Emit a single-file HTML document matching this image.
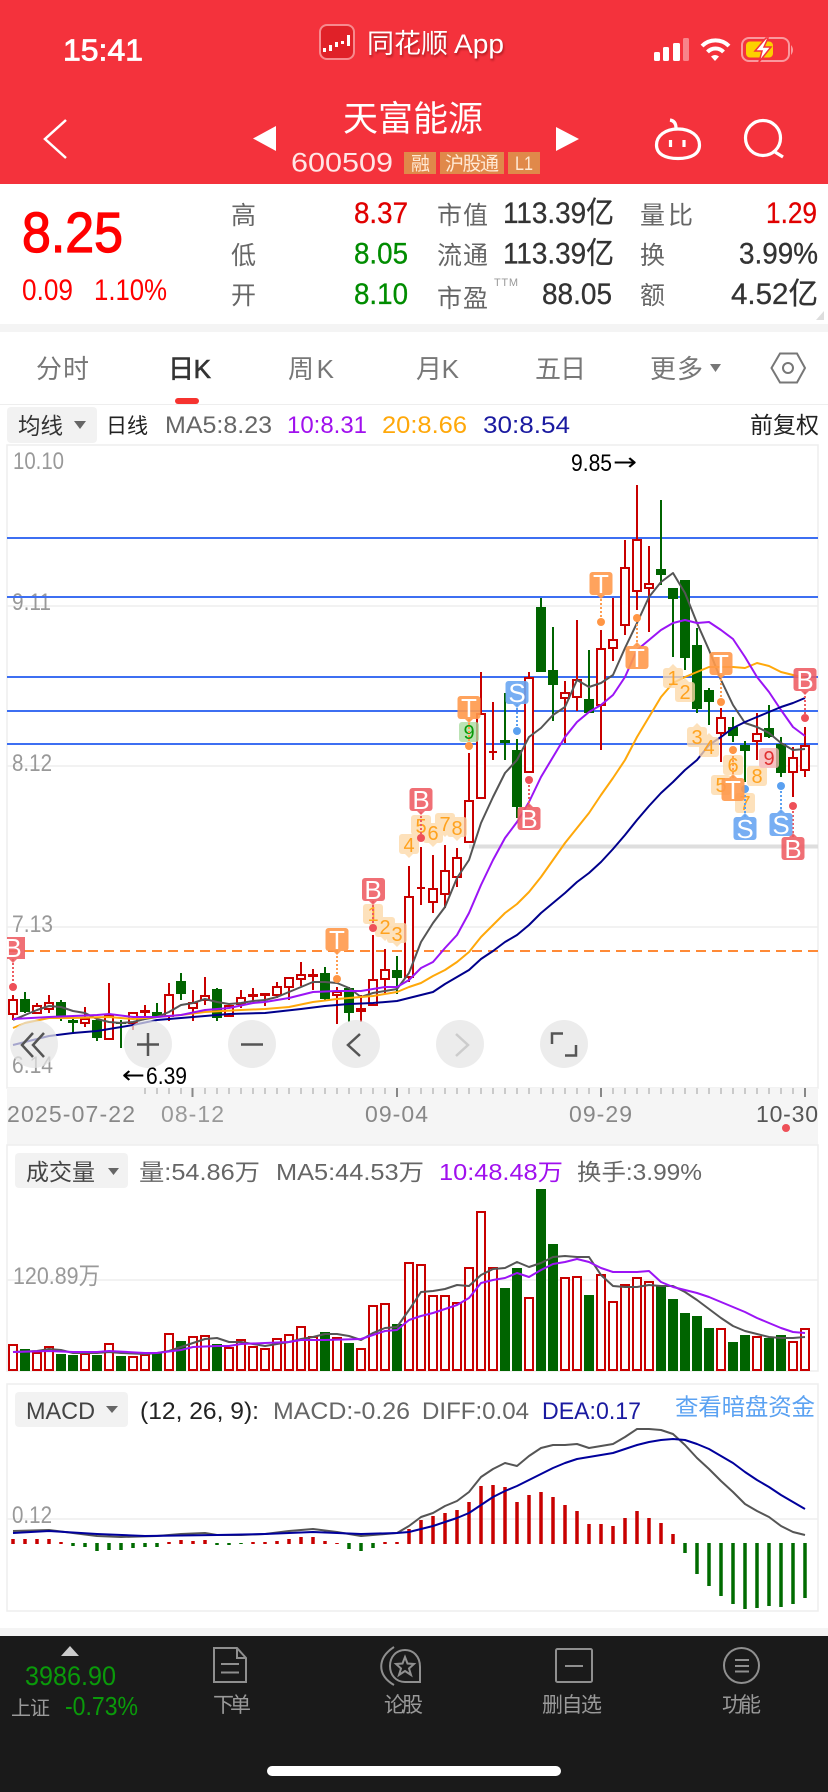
<!DOCTYPE html>
<html lang="zh-CN"><head><meta charset="utf-8"><title>天富能源</title>
<style>
html,body{margin:0;padding:0;background:#fff;width:828px;height:1792px;overflow:hidden}
svg{display:block}
text{font-family:"Liberation Sans","Noto Sans CJK SC",sans-serif}
.w{fill:#fff}
.lab{font-size:25px;fill:#666}
.tab{font-size:26px;fill:#777}
.ax{font-size:24px;fill:#999}
.m{font-size:24px;fill:#666}
.mk{font-size:26px;fill:#fff;text-anchor:middle}
.tg{font-size:20px;fill:#ffa21e;text-anchor:middle}
.foot{font-size:21px;fill:#999}
</style></head><body>
<svg width="828" height="1792" viewBox="0 0 828 1792" xmlns="http://www.w3.org/2000/svg">
<rect width="828" height="1792" fill="#fff"/>
<!-- header -->
<rect width="828" height="184" fill="#f4323c"/>
<text x="63" y="60.5" class="w" font-size="31" stroke="#fff" stroke-width=".8" textLength="80" lengthAdjust="spacingAndGlyphs">15:41</text>
<rect x="320" y="25" width="34" height="34" rx="7" fill="#e02128" stroke="#f78a8e" stroke-width="2"/>
<path d="M323 48h3v4h-3zM329 45h3v6h-3zM335 42h3v5h-3zM341 41h3v3h-3zM347 35h3v11h-3z" fill="#fff"/>
<g style="filter:drop-shadow(1px 2px 1px rgba(90,0,0,.45))">
<text x="367" y="53" class="w" font-size="27" textLength="81">同花顺</text>
<text x="454" y="53" class="w" font-size="27" textLength="50" lengthAdjust="spacingAndGlyphs">App</text></g>
<g fill="#fff"><rect x="654" y="52" width="6" height="9" rx="1.5"/><rect x="663" y="47" width="6" height="14" rx="1.5"/><rect x="673" y="43" width="7" height="18" rx="1.5"/><rect x="683" y="38" width="6" height="23" rx="1.5" opacity=".4"/></g>
<g fill="none" stroke="#fff" stroke-width="4"><path d="M702 46A19 19 0 0 1 729 46"/><path d="M707.500 52A11 11 0 0 1 723.500 52"/></g>
<path d="M711 56.500Q715 53.500 719 56.500L715 61Z" fill="#fff"/>
<rect x="742" y="38" width="47" height="23" rx="7" fill="none" stroke="#fff" stroke-opacity=".5" stroke-width="2"/>
<path d="M791 45q4 5 0 10z" fill="#fff" fill-opacity=".5"/>
<rect x="746" y="41.500" width="27" height="16" rx="4" fill="#fdd000"/>
<path d="M766 38L755 51H762L759 62L771 47H764L768 38Z" fill="#fff" stroke="#f4323c" stroke-width="1.500"/>
<path d="M66 120L45 139L66 158" fill="none" stroke="#fff" stroke-width="2.500"/>
<path d="M276 126V151L253 138.500Z" fill="#fff"/><path d="M556 127V151L579 139Z" fill="#fff"/>
<text x="343" y="131" class="w" font-size="35" textLength="140">天富能源</text>
<text x="291" y="171.500" font-size="27" fill="#ffe6e6" textLength="102" lengthAdjust="spacingAndGlyphs">600509</text>
<rect x="404" y="152" width="32" height="22" fill="#e0894a"/><rect x="440" y="152" width="64" height="22" fill="#e0894a"/><rect x="508" y="152" width="32" height="22" fill="#e0894a"/>
<g font-size="19" fill="#ffe9d4"><text x="411" y="170" textLength="18">融</text><text x="445" y="170" textLength="54">沪股通</text><text x="515" y="170" textLength="18" lengthAdjust="spacingAndGlyphs">L1</text></g>
<g fill="none" stroke="#fff" stroke-width="3.200"><path d="M678 129C691 129 699.500 136 699.500 145C699.500 154 691 158.500 678 158.500C665 158.500 656.500 154 656.500 145C656.500 136 665 129 678 129Z"/><path d="M670 120Q676 121 676 128"/><path d="M670.500 140V147M684 140V147"/>
<circle cx="763" cy="138" r="17.500"/><path d="M775 152L783 157"/></g>
<!-- quote -->
<text x="22" y="252" font-size="57" fill="#f00" stroke="#f00" stroke-width="1.300" textLength="101" lengthAdjust="spacingAndGlyphs">8.25</text>
<text x="22" y="300" font-size="30" fill="#f00" textLength="51" lengthAdjust="spacingAndGlyphs">0.09</text>
<text x="94" y="300" font-size="30" fill="#f00" textLength="73" lengthAdjust="spacingAndGlyphs">1.10%</text>
<g><text x="231" y="224" class="lab">高</text><text x="231" y="264" class="lab">低</text><text x="231" y="304" class="lab">开</text>
<text x="437" y="224" class="lab" textLength="51">市值</text><text x="437" y="264" class="lab" textLength="51">流通</text><text x="437" y="307" class="lab" textLength="51">市盈</text>
<text x="640" y="224" class="lab" textLength="53">量比</text><text x="640" y="264" class="lab">换</text><text x="640" y="304" class="lab">额</text></g>
<text x="494" y="286" font-size="11" fill="#999" textLength="24">TTM</text>
<g font-size="30">
<text x="354" y="223" fill="#e00000" stroke="#e00000" stroke-width=".3" textLength="54" lengthAdjust="spacingAndGlyphs">8.37</text>
<text x="354" y="263.500" fill="#008c00" stroke="#008c00" stroke-width=".3" textLength="54" lengthAdjust="spacingAndGlyphs">8.05</text>
<text x="354" y="304" fill="#008c00" stroke="#008c00" stroke-width=".3" textLength="54" lengthAdjust="spacingAndGlyphs">8.10</text>
<text x="503" y="223" fill="#333" stroke="#333" stroke-width=".3" textLength="111" lengthAdjust="spacingAndGlyphs">113.39亿</text>
<text x="503" y="263.500" fill="#333" stroke="#333" stroke-width=".3" textLength="111" lengthAdjust="spacingAndGlyphs">113.39亿</text>
<text x="542" y="304" fill="#333" stroke="#333" stroke-width=".3" textLength="70" lengthAdjust="spacingAndGlyphs">88.05</text>
<text x="766" y="223" fill="#e00000" stroke="#e00000" stroke-width=".3" textLength="51" lengthAdjust="spacingAndGlyphs">1.29</text>
<text x="739" y="263.500" fill="#333" stroke="#333" stroke-width=".3" textLength="79" lengthAdjust="spacingAndGlyphs">3.99%</text>
<text x="731" y="304" fill="#333" stroke="#333" stroke-width=".3" textLength="87" lengthAdjust="spacingAndGlyphs">4.52亿</text></g>
<path d="M824 311V320H816Z" fill="#ddd"/>
<rect y="324" width="828" height="8" fill="#f4f4f4"/>
<!-- tabs -->
<text x="36" y="378" class="tab" textLength="53">分时</text>
<text x="168" y="378" font-size="26" fill="#333" stroke="#333" stroke-width=".6" textLength="43">日K</text>
<text x="288" y="378" class="tab" textLength="46">周K</text>
<text x="416" y="378" class="tab" textLength="43">月K</text>
<text x="535" y="378" class="tab" textLength="51">五日</text>
<text x="650" y="378" class="tab" textLength="53">更多</text>
<path d="M710 364H721L715.500 372Z" fill="#777"/>
<path d="M771.500 368L780 353.500H797L805 368L797 382.500H780Z" fill="none" stroke="#777" stroke-width="2"/><circle cx="788" cy="368" r="5" fill="none" stroke="#777" stroke-width="2"/>
<rect x="175" y="398" width="24" height="6" rx="3" fill="#f6332f"/>
<rect y="404" width="828" height="1" fill="#eee"/>
<!-- MA row -->
<rect x="7" y="407" width="90" height="36" rx="4" fill="#f2f2f2"/>
<text x="18" y="434" font-size="22.500" fill="#333" textLength="45">均线</text><path d="M74 421H86L80 429Z" fill="#666"/>
<text x="106" y="433" font-size="21" fill="#222" textLength="42">日线</text>
<text x="165" y="433" class="m" textLength="107" lengthAdjust="spacingAndGlyphs">MA5:8.23</text>
<text x="287" y="433" font-size="24" fill="#a010ee" textLength="80" lengthAdjust="spacingAndGlyphs">10:8.31</text>
<text x="382" y="433" font-size="24" fill="#ffa80a" textLength="85" lengthAdjust="spacingAndGlyphs">20:8.66</text>
<text x="483" y="433" font-size="24" fill="#1a1aa0" textLength="87" lengthAdjust="spacingAndGlyphs">30:8.54</text>
<text x="750" y="433" font-size="23" fill="#222" textLength="69">前复权</text>
<!-- main chart frame -->
<rect x="7" y="445" width="811" height="643" fill="#fff" stroke="#eee" stroke-width="1.500"/>
<path d="M7 606H818M7 766H818M7 927H818" stroke="#eee" stroke-width="1.500"/>
<text x="13" y="469" class="ax" textLength="51" lengthAdjust="spacingAndGlyphs">10.10</text>
<text x="12" y="610" class="ax" textLength="39" lengthAdjust="spacingAndGlyphs">9.11</text>
<text x="12" y="771" class="ax" textLength="40" lengthAdjust="spacingAndGlyphs">8.12</text>
<text x="12" y="932" class="ax" textLength="41" lengthAdjust="spacingAndGlyphs">7.13</text>
<text x="12" y="1073" class="ax" textLength="41" lengthAdjust="spacingAndGlyphs">6.14</text>
<path d="M7 538H818M7 597H818M7 677H818M7 711H818M7 744H818" stroke="#3d6ff2" stroke-width="2"/>
<path d="M8 951H818" stroke="#ff8a36" stroke-width="2" stroke-dasharray="10 6"/>
<rect x="469" y="844.500" width="349" height="4" fill="#dedede"/>
<!-- wicks -->
<path fill="none" stroke="#c80000" stroke-width="2" d="M13 995V1020M37 1003V1013M49 995V1013M85 1007V1027M109 983V1039M133 1012V1030M145 1005V1016M169 983V1021M193 990V1021M205 977V1005M229 1005V1017M241 990V1008M253 988V1001M265 994V1006M277 982V998M289 977V1000M301 962V986M313 969V990M337 987V1024M361 995V1022M373 935V1006M385 949V993M409 866V982M421 847V905M433 855V913M445 845V908M457 848V887M469 753V842M481 672V799M493 702V760M529 672V772M565 681V743M577 620V711M601 630V750M613 598V661M625 540V635M637 485V610M649 546V632M721 708V762M757 713V760M793 747V797M805 727V777"/>
<path fill="none" stroke="#006400" stroke-width="2" d="M25 992V1013M61 1000V1021M73 1017V1034M97 1019V1041M121 1020V1048M157 1003V1017M181 973V1000M217 988V1021M325 967V1000M349 987V1022M397 956V994M505 693V760M517 739V818M541 598V672M553 627V721M589 650V713M661 500V585M673 588V657M685 580V670M697 628V713M709 688V725M733 717V742M745 741V782M769 705V738M781 737V777"/>
<!-- bodies -->
<path fill="#006400" d="M20 999h10v13h-10zM56 1002h10v14h-10zM68 1020h10v3h-10zM92 1020h10v18h-10zM116 1022h10v2h-10zM152 1012h10v4h-10zM176 981h10v13h-10zM212 989h10v29h-10zM320 973h10v26h-10zM344 988h10v25h-10zM392 970h10v8h-10zM500 740h10v3h-10zM512 750h10v57h-10zM536 607h10v65h-10zM548 670h10v15h-10zM584 699h10v14h-10zM656 569h10v6h-10zM668 588h10v11h-10zM680 580h10v78h-10zM692 645h10v64h-10zM704 690h10v12h-10zM728 727h10v9h-10zM740 745h10v6h-10zM764 728h10v9h-10zM776 744h10v29h-10z"/>
<path fill="#fff" stroke="#c80000" stroke-width="2" d="M9 1000h8v14h-8zM33 1006h8v7h-8zM45 1003h8v6h-8zM81 1019h8v4h-8zM105 1016h8v23h-8zM129 1013h8v10h-8zM141 1011h8v1h-8zM165 995h8v21h-8zM189 1003h8v5h-8zM201 996h8v4h-8zM225 1006h8v10h-8zM237 998h8v6h-8zM249 995h8v1h-8zM261 994h8v1h-8zM273 987h8v8h-8zM285 978h8v9h-8zM297 975h8v4h-8zM309 975h8v1h-8zM333 992h8v3h-8zM357 1009h8v2h-8zM369 980h8v25h-8zM381 970h8v9h-8zM405 897h8v80h-8zM417 888h8v0h-8zM429 889h8v13h-8zM441 871h8v23h-8zM453 858h8v19h-8zM465 801h8v41h-8zM477 714h8v84h-8zM489 752h8v0h-8zM525 678h8v94h-8zM561 693h8v5h-8zM573 680h8v17h-8zM597 649h8v56h-8zM609 640h8v8h-8zM621 568h8v57h-8zM633 540h8v51h-8zM645 584h8v4h-8zM717 718h8v15h-8zM753 734h8v7h-8zM789 758h8v14h-8zM801 746h8v24h-8z"/>
<!-- MA lines -->
<g fill="none" stroke-width="2" stroke-linejoin="round">
<polyline stroke="#555" points="13,1020 25,1015 37,1010 49,1006 61,1007 73,1011 85,1013 97,1019 109,1022 121,1023 133,1022 145,1019 157,1017 169,1012 181,1005 193,1003 205,999 217,1002 229,1004 241,1003 253,1001 265,1000 277,997 289,992 301,987 313,982 325,982 337,983 349,988 361,997 373,993 385,991 397,989 409,973 421,942 433,923 445,907 457,878 469,860 481,823 493,797 505,773 517,760 529,737 541,728 553,715 565,707 577,680 589,687 601,683 613,675 625,648 637,623 649,597 661,582 673,573 685,593 697,623 709,650 721,680 733,705 745,723 757,727 769,733 781,743 793,750 805,749"/>
<polyline stroke="#ffa80a" points="13,1028 25,1023 49,1018 73,1018 109,1017 133,1019 157,1017 181,1015 205,1012 241,1010 265,1009 289,1007 313,1002 337,999 361,997 373,996 397,992 409,987 421,983 433,976 445,970 457,962 469,952 481,937 493,925 505,913 517,904 529,892 541,877 553,860 565,843 577,828 589,813 601,795 613,778 625,760 637,737 649,717 661,697 673,683 685,677 697,672 709,667 721,667 733,667 745,668 757,663 769,666 781,672 793,675 805,678"/>
<polyline stroke="#9b14f5" points="13,1019 49,1017 73,1016 97,1015 109,1014 133,1017 157,1017 181,1015 205,1010 229,1008 253,1003 265,1002 289,998 313,992 337,991 361,991 385,987 397,987 409,980 421,968 433,962 445,948 457,935 469,913 481,885 493,860 505,838 517,822 529,802 541,777 553,757 565,737 577,722 589,712 601,705 613,695 625,677 637,650 649,640 661,630 673,623 685,620 697,623 709,622 721,630 733,639 745,657 757,677 769,692 781,710 793,727 805,736"/>
<polyline stroke="#00008c" points="13,1045 49,1036 73,1033 97,1031 133,1025 157,1020 193,1017 229,1014 265,1013 301,1009 325,1006 349,1004 373,1003 397,1001 409,998 421,995 433,992 445,984 457,977 469,970 481,959 493,951 505,942 517,935 529,925 541,913 553,903 565,893 577,882 589,873 601,862 613,849 625,835 637,820 649,806 661,793 673,782 685,770 697,760 709,745 721,737 733,728 745,722 757,717 769,712 781,707 793,703 805,698"/>
</g>
<text x="571" y="471" font-size="24" fill="#000" textLength="41" lengthAdjust="spacingAndGlyphs">9.85</text>
<text x="613" y="470" font-size="24" fill="#000" textLength="24" lengthAdjust="spacingAndGlyphs" style='font-family:"DejaVu Sans",sans-serif'>→</text>
<text x="122" y="1083" font-size="24" fill="#000" textLength="23" lengthAdjust="spacingAndGlyphs" style='font-family:"DejaVu Sans",sans-serif'>←</text>
<text x="146" y="1084" font-size="24" fill="#000" textLength="41" lengthAdjust="spacingAndGlyphs">6.39</text>
<!-- number tags -->
<g opacity=".78">
<g fill="#fdd9a8"><rect x="363" y="904" width="20" height="20" rx="3"/><rect x="375" y="917" width="20" height="20" rx="3"/><rect x="387" y="923" width="20" height="20" rx="3"/><rect x="399" y="834" width="20" height="20" rx="3"/><rect x="411" y="815" width="20" height="20" rx="3"/><rect x="423" y="823" width="20" height="20" rx="3"/><rect x="435" y="813" width="20" height="20" rx="3"/><rect x="447" y="817" width="20" height="20" rx="3"/><rect x="663" y="668" width="20" height="20" rx="3"/><rect x="675" y="682" width="20" height="20" rx="3"/><rect x="687" y="727" width="20" height="20" rx="3"/><rect x="699" y="737" width="20" height="20" rx="3"/><rect x="711" y="775" width="20" height="20" rx="3"/><rect x="723" y="755" width="20" height="20" rx="3"/><rect x="735" y="793" width="20" height="20" rx="3"/><rect x="747" y="766" width="20" height="20" rx="3"/>
<path d="M405 854h8l-4 4zM417 835h8l-4 4zM429 843h8l-4 4zM441 833h8l-4 4zM453 837h8l-4 4zM369 924h8l-4 4zM381 937h8l-4 4zM393 943h8l-4 4zM669 668h8l-4-4zM681 682h8l-4-4zM693 727h8l-4-4zM705 737h8l-4-4z"/></g>
<rect x="459" y="722" width="20" height="20" rx="3" fill="#a8dca0"/><rect x="759" y="748" width="20" height="20" rx="3" fill="#f7b4b4"/>
</g>
<g><text class="tg" x="373" y="921">1</text><text class="tg" x="385" y="934">2</text><text class="tg" x="397" y="941">3</text><text class="tg" x="409" y="852">4</text><text class="tg" x="421" y="833">5</text><text class="tg" x="433" y="840">6</text><text class="tg" x="445" y="831">7</text><text class="tg" x="457" y="835">8</text><text class="tg" x="673" y="685">1</text><text class="tg" x="685" y="699">2</text><text class="tg" x="697" y="744">3</text><text class="tg" x="709" y="754">4</text><text class="tg" x="721" y="792">5</text><text class="tg" x="733" y="772">6</text><text class="tg" x="745" y="810">7</text><text class="tg" x="757" y="783">8</text><text class="tg" style="fill:#0a9a0a" x="469" y="739">9</text><text class="tg" style="fill:#e03030" x="769" y="765">9</text></g>
<!-- stems and dots -->
<g fill="none" stroke-width="2" stroke-dasharray="2 2">
<path stroke="#ee5c62" d="M13 959V987M373 901V928M421 812V838M529 807V780M805 692V718M793 837V806"/>
<path stroke="#ff9d50" d="M337 952V979M469 719V746M601 595V622M637 646V618M721 675V702M733 778V750"/>
<path stroke="#5aa0f0" d="M517 704V731M745 817V789M781 813V786"/>
</g>
<g fill="#ee5058"><circle cx="13" cy="987" r="4"/><circle cx="373" cy="928" r="4"/><circle cx="421" cy="838" r="4"/><circle cx="529" cy="780" r="4"/><circle cx="805" cy="718" r="4"/><circle cx="793" cy="806" r="4"/></g>
<g fill="#ff9645"><circle cx="337" cy="979" r="4"/><circle cx="469" cy="746" r="4"/><circle cx="601" cy="622" r="4"/><circle cx="637" cy="618" r="4"/><circle cx="721" cy="702" r="4"/><circle cx="733" cy="750" r="4"/></g>
<g fill="#5aa0f0"><circle cx="517" cy="731" r="4"/><circle cx="745" cy="789" r="4"/><circle cx="781" cy="786" r="4"/></g>
<!-- markers -->
<g fill="#ee5c62" opacity=".88"><path d="M7 937h18v22h-18zM9 959h8l-4 4z"/><rect x="362" y="878" width="23" height="23" rx="3"/><rect x="409.500" y="788" width="23" height="23" rx="3"/><rect x="517.500" y="807" width="23" height="23" rx="3"/><rect x="793.500" y="668" width="23" height="23" rx="3"/><rect x="781.500" y="837" width="23" height="23" rx="3"/><path d="M369 901h8l-4 4zM417 811h8l-4 4zM525 807h8l-4-4zM801 691h8l-4 4zM789 837h8l-4-4z"/></g>
<g fill="#ff9a4c" opacity=".9"><rect x="325.500" y="928" width="23" height="23" rx="3"/><rect x="457.500" y="696" width="23" height="23" rx="3"/><rect x="589.500" y="572" width="23" height="23" rx="3"/><rect x="625.500" y="646" width="23" height="23" rx="3"/><rect x="709.500" y="652" width="23" height="23" rx="3"/><rect x="721.500" y="778" width="23" height="23" rx="3"/><path d="M333 951h8l-4 4zM465 719h8l-4 4zM597 595h8l-4 4zM633 646h8l-4-4zM717 675h8l-4 4zM729 778h8l-4-4z"/></g>
<g fill="#69a6f2" opacity=".9"><rect x="505.500" y="681" width="23" height="23" rx="3"/><rect x="733.500" y="817" width="23" height="23" rx="3"/><rect x="769.500" y="813" width="23" height="23" rx="3"/><path d="M513 704h8l-4 4zM741 817h8l-4-4zM777 813h8l-4-4z"/></g>
<g><text class="mk" x="13" y="957">B</text><text class="mk" x="373" y="899">B</text><text class="mk" x="421" y="809">B</text><text class="mk" x="529" y="828">B</text><text class="mk" x="805" y="689">B</text><text class="mk" x="793" y="858">B</text>
<text class="mk" x="337" y="949">T</text><text class="mk" x="469" y="717">T</text><text class="mk" x="601" y="593">T</text><text class="mk" x="637" y="667">T</text><text class="mk" x="721" y="673">T</text><text class="mk" x="733" y="799">T</text>
<text class="mk" x="517" y="702">S</text><text class="mk" x="745" y="838">S</text><text class="mk" x="781" y="834">S</text></g>
<!-- zoom buttons -->
<g fill="#e4e4e4" fill-opacity=".72"><circle cx="34" cy="1044" r="24"/><circle cx="148" cy="1044" r="24"/><circle cx="252" cy="1044" r="24"/><circle cx="356" cy="1044" r="24"/><circle cx="460" cy="1044" r="24"/><circle cx="564" cy="1044" r="24"/></g>
<g fill="none" stroke="#555" stroke-width="2.500">
<path d="M33 1033L22 1045L33 1057M44 1033L33 1045L44 1057"/>
<path d="M137 1044.500H159M148 1033V1056M241 1044.500H263M360 1034L348 1045L360 1056"/>
<path d="M552 1044V1033.500H563M576 1045V1055.500H565"/>
<path d="M456 1034L468 1045L456 1056" stroke="#ccc"/></g>
<!-- date axis -->
<rect x="7" y="1088" width="811" height="57" fill="#f5f5f5"/>
<path stroke="#bbb" stroke-width="1.500" fill="none" d="M145 1088v6M157 1088v6M169 1088v6M181 1088v6M205 1088v6M217 1088v6M229 1088v6M241 1088v6M253 1088v6M265 1088v6M277 1088v6M289 1088v6M301 1088v6M313 1088v6M325 1088v6M337 1088v6M349 1088v6M361 1088v6M373 1088v6M385 1088v6M409 1088v6M421 1088v6M433 1088v6M445 1088v6M457 1088v6M469 1088v6M481 1088v6M493 1088v6M505 1088v6M517 1088v6M529 1088v6M541 1088v6M553 1088v6M565 1088v6M577 1088v6M589 1088v6M613 1088v6M625 1088v6M637 1088v6M649 1088v6M661 1088v6M673 1088v6M685 1088v6M697 1088v6M709 1088v6M721 1088v6M733 1088v6M745 1088v6M757 1088v6M769 1088v6M781 1088v6M793 1088v6"/>
<path stroke="#888" stroke-width="2" d="M192.500 1088v9M397 1088v9M601 1088v9M805 1088v9"/>
<g font-size="23"><text x="7" y="1122" fill="#888" textLength="128">2025-07-22</text><text x="161" y="1122" fill="#999" textLength="63">08-12</text><text x="365" y="1122" fill="#888" textLength="63">09-04</text><text x="569" y="1122" fill="#888" textLength="63">09-29</text><text x="756" y="1122" fill="#555" textLength="62">10-30</text></g>
<circle cx="786" cy="1128" r="4" fill="#ee5058"/>
<!-- volume panel -->
<rect x="7" y="1145" width="811" height="226" fill="#fff" stroke="#eee" stroke-width="1.500"/>
<path d="M7 1280H818" stroke="#eee" stroke-width="1.500"/>
<rect x="15" y="1153" width="113" height="35" rx="4" fill="#f2f2f2"/>
<text x="26" y="1180" font-size="23" fill="#444" textLength="69">成交量</text><path d="M108 1168H119L113.500 1175Z" fill="#666"/>
<text x="139" y="1180" font-size="23" fill="#666" textLength="121" lengthAdjust="spacingAndGlyphs">量:54.86万</text>
<text x="276" y="1180" font-size="23" fill="#666" textLength="148" lengthAdjust="spacingAndGlyphs">MA5:44.53万</text>
<text x="439" y="1180" font-size="23" fill="#a010ee" textLength="124" lengthAdjust="spacingAndGlyphs">10:48.48万</text>
<text x="577" y="1180" font-size="23" fill="#666" textLength="125" lengthAdjust="spacingAndGlyphs">换手:3.99%</text>
<text x="13" y="1284" class="ax" textLength="87" lengthAdjust="spacingAndGlyphs">120.89万</text>
<path fill="#006400" d="M20 1349h10V1371h-10zM56 1354h10V1371h-10zM68 1355h10V1371h-10zM92 1355h10V1371h-10zM116 1356h10V1371h-10zM152 1353h10V1371h-10zM176 1341h10V1371h-10zM212 1344h10V1371h-10zM320 1332h10V1371h-10zM344 1343h10V1371h-10zM392 1324h10V1371h-10zM500 1288h10V1371h-10zM512 1268h10V1371h-10zM536 1189h10V1371h-10zM548 1244h10V1371h-10zM584 1295h10V1371h-10zM656 1286h10V1371h-10zM668 1299h10V1371h-10zM680 1313h10V1371h-10zM692 1316h10V1371h-10zM704 1328h10V1371h-10zM728 1342h10V1371h-10zM740 1335h10V1371h-10zM764 1338h10V1371h-10zM776 1335h10V1371h-10z"/>
<path fill="#fff" stroke="#c80000" stroke-width="2" d="M9 1345h8V1370h-8zM33 1353h8V1370h-8zM45 1347h8V1370h-8zM81 1354h8V1370h-8zM105 1344h8V1370h-8zM129 1357h8V1370h-8zM141 1355h8V1370h-8zM165 1334h8V1370h-8zM189 1337h8V1370h-8zM201 1336h8V1370h-8zM225 1348h8V1370h-8zM237 1340h8V1370h-8zM249 1347h8V1370h-8zM261 1349h8V1370h-8zM273 1339h8V1370h-8zM285 1335h8V1370h-8zM297 1327h8V1370h-8zM309 1337h8V1370h-8zM333 1338h8V1370h-8zM357 1349h8V1370h-8zM369 1306h8V1370h-8zM381 1304h8V1370h-8zM405 1263h8V1370h-8zM417 1265h8V1370h-8zM429 1296h8V1370h-8zM441 1296h8V1370h-8zM453 1303h8V1370h-8zM465 1268h8V1370h-8zM477 1212h8V1370h-8zM489 1268h8V1370h-8zM525 1298h8V1370h-8zM561 1278h8V1370h-8zM573 1277h8V1370h-8zM597 1275h8V1370h-8zM609 1302h8V1370h-8zM621 1285h8V1370h-8zM633 1278h8V1370h-8zM645 1282h8V1370h-8zM717 1329h8V1370h-8zM753 1337h8V1370h-8zM789 1342h8V1370h-8zM801 1329h8V1370h-8z"/>
<g fill="none" stroke-width="2" stroke-linejoin="round">
<polyline stroke="#555" points="13,1352 37,1351 49,1349 61,1350 73,1353 97,1353 109,1352 121,1353 145,1354 157,1353 169,1351 181,1347 193,1343 205,1339 217,1338 229,1342 241,1342 253,1344 265,1346 277,1344 289,1342 301,1339 313,1337 325,1334 337,1334 349,1336 361,1340 373,1333 385,1328 397,1327 409,1310 421,1292 433,1291 445,1289 457,1285 469,1286 481,1275 493,1269 505,1268 517,1262 529,1267 541,1263 553,1257 565,1256 577,1257 589,1257 601,1275 613,1286 625,1287 637,1287 649,1285 661,1286 673,1286 685,1292 697,1300 709,1309 721,1318 733,1326 745,1331 757,1334 769,1337 781,1338 793,1338 805,1337"/>
<polyline stroke="#9b14f5" points="13,1352 49,1351 73,1352 97,1352 109,1351 145,1353 157,1353 181,1350 193,1347 217,1346 229,1346 241,1344 265,1343 289,1342 301,1340 325,1340 361,1339 373,1335 385,1331 397,1330 409,1320 421,1316 433,1313 445,1309 457,1305 469,1298 481,1283 493,1280 505,1278 517,1273 529,1277 541,1270 553,1264 565,1262 577,1259 589,1262 601,1268 613,1272 625,1272 637,1272 649,1271 661,1282 673,1287 685,1290 697,1293 709,1297 721,1302 733,1307 745,1312 757,1318 769,1323 781,1328 793,1332 805,1333"/>
</g>
<!-- MACD panel -->
<rect x="7" y="1384" width="811" height="227" fill="#fff" stroke="#eee" stroke-width="1.500"/>
<path d="M7 1519H818" stroke="#eee" stroke-width="1.500"/>
<rect x="15" y="1392" width="113" height="35" rx="4" fill="#f2f2f2"/>
<text x="26" y="1419" font-size="24" fill="#444" textLength="69" lengthAdjust="spacingAndGlyphs">MACD</text><path d="M106 1406H118L112 1413Z" fill="#666"/>
<text x="140" y="1419" font-size="24" fill="#222" textLength="119" lengthAdjust="spacingAndGlyphs">(12, 26, 9):</text>
<text x="273" y="1419" font-size="24" fill="#666" textLength="137" lengthAdjust="spacingAndGlyphs">MACD:-0.26</text>
<text x="422" y="1419" font-size="24" fill="#666" textLength="107" lengthAdjust="spacingAndGlyphs">DIFF:0.04</text>
<text x="542" y="1419" font-size="24" fill="#1a1aa0" textLength="99" lengthAdjust="spacingAndGlyphs">DEA:0.17</text>
<text x="675" y="1415" font-size="23.500" fill="#5ba2f2" textLength="140">查看暗盘资金</text>
<text x="12" y="1523" class="ax" textLength="40" lengthAdjust="spacingAndGlyphs">0.12</text>
<path fill="none" stroke="#c80000" stroke-width="3.500" d="M13 1539V1544M25 1539V1544M37 1539V1544M49 1539V1544M61 1542V1544M169 1542V1544M181 1540V1544M193 1541V1544M205 1540V1544M253 1542V1544M265 1542V1544M277 1541V1544M289 1539V1544M301 1537V1544M313 1537V1544M325 1541V1544M337 1543V1544M385 1542V1544M397 1542V1544M409 1529V1544M421 1520V1544M433 1516V1544M445 1513V1544M457 1510V1544M469 1502V1544M481 1486V1544M493 1485V1544M505 1487V1544M517 1502V1544M529 1495V1544M541 1492V1544M553 1497V1544M565 1505V1544M577 1511V1544M589 1524V1544M601 1524V1544M613 1526V1544M625 1518V1544M637 1511V1544M649 1518V1544M661 1523V1544M673 1534V1544"/>
<path fill="none" stroke="#006b00" stroke-width="3.500" d="M73 1543V1546M85 1543V1547M97 1543V1551M109 1543V1550M121 1543V1550M133 1543V1548M145 1543V1547M157 1543V1547M217 1543V1545M229 1543V1545M241 1543V1544M349 1543V1549M361 1543V1551M373 1543V1548M685 1543V1553M697 1543V1574M709 1543V1586M721 1543V1596M733 1543V1604M745 1543V1609M757 1543V1608M769 1543V1606M781 1543V1607M793 1543V1604M805 1543V1598"/>
<g fill="none" stroke-width="2" stroke-linejoin="round">
<polyline stroke="#555" points="13,1531 49,1530 73,1533 97,1536 121,1537 157,1536 181,1534 205,1533 217,1535 241,1535 265,1534 289,1531 313,1529 337,1532 361,1536 397,1533 409,1526 421,1517 433,1513 445,1506 457,1501 469,1492 481,1477 493,1469 505,1463 517,1466 529,1456 541,1448 553,1445 565,1445 577,1444 589,1448 601,1446 613,1444 625,1437 637,1429 649,1429 661,1430 673,1434 685,1445 697,1458 709,1469 721,1481 733,1492 745,1504 757,1511 769,1517 781,1526 793,1532 805,1535"/>
<polyline stroke="#00009c" points="13,1533 49,1531 97,1534 145,1536 217,1535 265,1534 313,1532 361,1534 397,1533 409,1532 421,1529 433,1526 445,1522 457,1518 469,1513 481,1505 493,1497 505,1491 517,1486 529,1480 541,1474 553,1468 565,1463 577,1459 589,1457 601,1455 613,1453 625,1449 637,1445 649,1442 661,1440 673,1439 685,1440 697,1444 709,1449 721,1456 733,1463 745,1472 757,1480 769,1487 781,1495 793,1502 805,1509"/>
</g>
<!-- bottom bar -->
<rect y="1628" width="828" height="8" fill="#f4f4f4"/>
<rect y="1636" width="828" height="156" fill="#1a1a1a"/>
<path d="M61 1656L70 1646L79 1656Z" fill="#ccc"/>
<text x="25" y="1685" font-size="27" fill="#0a9a0a" textLength="91" lengthAdjust="spacingAndGlyphs">3986.90</text>
<text x="11" y="1715" font-size="20" fill="#999" textLength="39">上证</text>
<text x="65" y="1715" font-size="26" fill="#0a9a0a" textLength="73" lengthAdjust="spacingAndGlyphs">-0.73%</text>
<g fill="none" stroke="#8f8f8f" stroke-width="2">
<path d="M214 1648H237L246 1658V1682H214Z"/><path d="M237 1648V1658H246"/><path d="M221 1664H239M221 1672.500H239"/>
<path d="M394 1647C377 1658 377 1675 394 1685"/>
<path d="M420 1682V1667C420 1656 413 1650 405 1650C396 1650 390 1657 390 1666C390 1675 396 1682 405 1682Z"/>
<path d="M405 1657L407.500 1663.500L414 1664L409 1668.500L411 1675L405 1671L399 1675L401 1668.500L396 1664L402.500 1663.500Z"/>
<rect x="556" y="1649" width="36" height="33" rx="1.500"/><path d="M565 1666H583"/>
<ellipse cx="741.500" cy="1665.500" rx="17.500" ry="17.500"/><path d="M735 1660H749M735 1666H749M735 1671.500H749"/>
</g>
<text x="213" y="1712" class="foot" textLength="38">下单</text>
<text x="384" y="1712" class="foot" textLength="39">论股</text>
<text x="542" y="1712" class="foot" textLength="60">删自选</text>
<text x="722" y="1712" class="foot" textLength="39">功能</text>
<rect x="267" y="1766" width="294" height="10" rx="5" fill="#fff"/>
</svg>
</body></html>
